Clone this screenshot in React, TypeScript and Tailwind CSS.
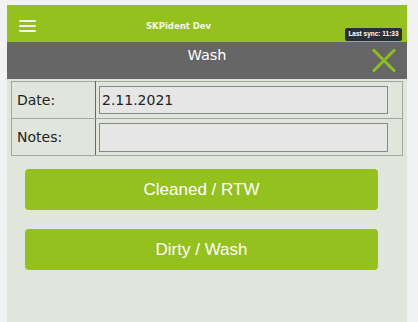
import React from 'react';

const App: React.FC = () => {
  return (
    <div className="w-[418px] h-[322px] bg-[#f2f2f2] pt-[5px] pl-[7px] overflow-hidden" style={{ fontFamily: '"DejaVu Sans", sans-serif' }}>
      <div className="w-[400px] h-[317px] bg-[#e0e6dc] flex flex-col">
        {/* Header */}
        <div className="relative h-[37px] bg-[#95c11f] flex items-center">
          <button className="ml-[12px] mt-[4px] w-[17px] flex flex-col gap-[3px]">
            <span className="block h-[2px] bg-[#f4f8e6] rounded-sm"></span>
            <span className="block h-[2px] bg-[#f4f8e6] rounded-sm"></span>
            <span className="block h-[2px] bg-[#f4f8e6] rounded-sm"></span>
          </button>
          <div className="absolute left-[139px] top-[17px] text-[8.5px] font-bold text-[#f4f8e6] leading-none">SKPident Dev</div>
          <div className="absolute right-[5px] top-[23px] h-[13px] w-[57px] rounded-[2px] bg-[#2b2f36] flex items-center justify-center z-10">
            <span className="text-[6.5px] font-bold text-white leading-none" style={{ fontFamily: '"Liberation Sans", sans-serif' }}>Last sync: 11:33</span>
          </div>
        </div>

        {/* Title bar */}
        <div className="relative h-[37px] bg-[#666666] flex justify-center">
          <span className="mt-[4px] text-[14.5px] text-white leading-[18px]">Wash</span>
          <svg className="absolute right-[10px] top-[6px]" width="26" height="25" viewBox="0 0 26 25">
            <path d="M2 1.5 L24 23.5 M24 1.5 L2 23.5" stroke="#8dbd1f" strokeWidth="3" fill="none" />
          </svg>
        </div>

        {/* Form */}
        <div className="mt-[2px] mx-[4px]">
          <table className="w-[392px] border-collapse border border-[#a3a89f] text-[14px] text-[#222]">
            <tbody>
              <tr className="h-[37px]">
                <td className="w-[85px] border border-[#a3a89f] border-r-[#666] pl-[5px]">Date:</td>
                <td className="border border-[#a3a89f] pl-[3px] pr-[14px]">
                  <div className="h-[28px] w-[289px] bg-[#e6e6e6] border border-[#888] flex items-center pl-[2px]">2.11.2021</div>
                </td>
              </tr>
              <tr className="h-[37px]">
                <td className="border border-[#a3a89f] border-r-[#666] pl-[5px]">Notes:</td>
                <td className="border border-[#a3a89f] pl-[3px] pr-[14px]">
                  <div className="h-[29px] w-[289px] bg-[#e6e6e6] border border-[#888]"></div>
                </td>
              </tr>
            </tbody>
          </table>
        </div>

        {/* Buttons */}
        <div className="ml-[18px] mt-[13px] w-[353px] flex flex-col gap-[19px]" style={{ fontFamily: '"Liberation Sans", sans-serif' }}>
          <button className="h-[41px] rounded-[4px] bg-[#95c11f] text-white text-[17px]">Cleaned / RTW</button>
          <button className="h-[41px] rounded-[4px] bg-[#95c11f] text-white text-[17px]">Dirty / Wash</button>
        </div>
      </div>
    </div>
  );
};

export default App;
